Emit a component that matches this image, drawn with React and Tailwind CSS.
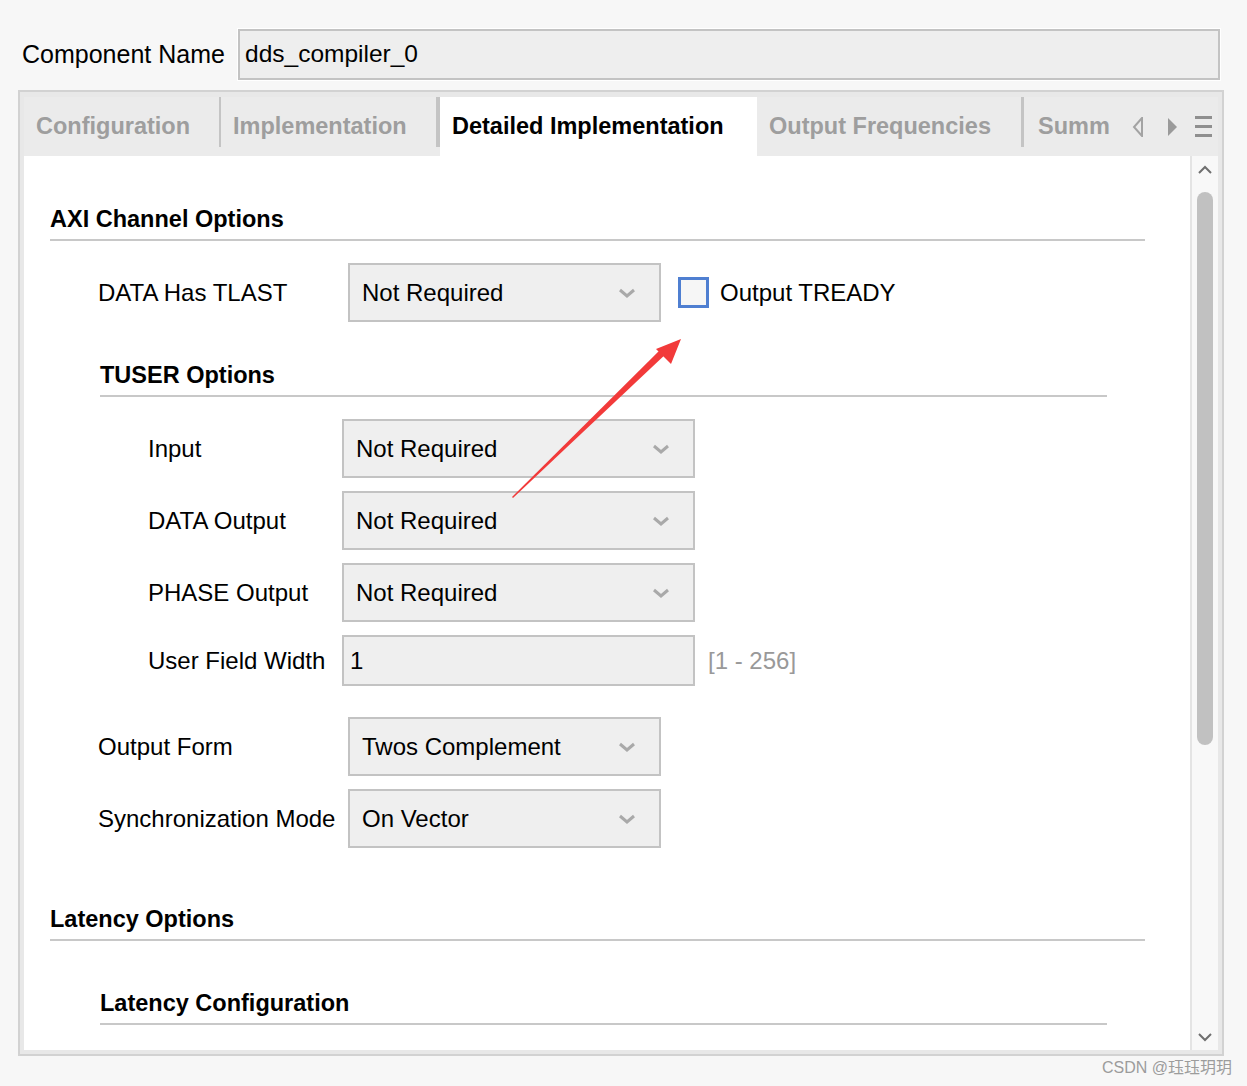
import React from "react";

const Chevron = ({ className = "" }) => (
  <svg width="18" height="12" viewBox="0 0 18 12" className={className}>
    <polyline points="2,3 9,9 16,3" fill="none" stroke="#a9a9a9" strokeWidth="3" />
  </svg>
);

const Select = ({ value, w }) => (
  <div
    className={`${w} h-[59px] border-2 border-[#c3c3c3] bg-[#efefef] flex items-center justify-between pl-[12px] pr-[23px]`}
  >
    <span className="text-[24px] text-black leading-none">{value}</span>
    <Chevron />
  </div>
);

const Heading = ({ text, className = "" }) => (
  <div className={`h-[41px] border-b-2 border-[#c8c8c8] flex items-center ${className}`}>
    <span className="text-[23.5px] font-bold text-black leading-none">{text}</span>
  </div>
);

const Tab = ({ label, w, active }) => (
  <div className={`${w} h-full flex items-center shrink-0 relative ${active ? "bg-white" : ""}`}>
    <span
      className={`pl-[12px] text-[23.5px] font-bold leading-none whitespace-nowrap ${
        active ? "text-black" : "text-[#9e9e9e]"
      }`}
    >
      {label}
    </span>
  </div>
);

const Sep = ({ className = "" }) => (
  <div className={`w-[2px] h-[50px] self-start bg-[#c4c4c4] shrink-0 ${className}`} />
);

export default function App() {
  return (
    <div
      className="w-[1247px] h-[1086px] bg-[#f7f7f7] relative overflow-hidden"
      style={{ fontFamily: '"Liberation Sans", Arial, "Noto Sans CJK SC", sans-serif' }}
    >
      {/* Component name row */}
      <div className="flex items-center pt-[28px] pl-[22px]">
        <span className="text-[25px] text-black leading-none w-[215px] whitespace-nowrap">Component Name</span>
        <div className="border border-white">
          <div className="w-[982px] h-[51px] border-2 border-[#c3c3c3] bg-[#eeeeee] flex items-center pl-[5px]">
            <span className="text-[24.5px] text-black leading-none">dds_compiler_0</span>
          </div>
        </div>
      </div>

      {/* Tab panel */}
      <div className="ml-[18px] mt-[9px] w-[1206px] h-[966px] border-2 border-[#d2d2d2] bg-[#e8e8e8] pt-[5px] pl-[4px] pr-[4px] pb-[4px] flex flex-col">
        {/* Tab bar */}
        <div className="h-[59px] bg-[#ebebeb] flex items-stretch overflow-hidden">
          <Tab label="Configuration" w="w-[195px]" />
          <Sep />
          <Tab label="Implementation" w="w-[215px]" />
          <Sep className="w-[4px] h-[50px]" />
          <Tab label="Detailed Implementation" w="w-[317px]" active />
          <Tab label="Output Frequencies" w="w-[264px]" />
          <Sep className="w-[3px]" />
          <div className="w-[100px] h-full flex items-center overflow-hidden shrink-0">
            <span className="pl-[14px] text-[23.5px] font-bold leading-none whitespace-nowrap text-[#9e9e9e]">
              Summ
            </span>
          </div>
          <div className="flex items-center h-full shrink-0">
            <svg width="14" height="20" viewBox="0 0 14 20" className="ml-[8px]">
              <polygon points="10,1 2,10 10,19" fill="none" stroke="#a3a3a3" strokeWidth="2" />
            </svg>
            <svg width="14" height="20" viewBox="0 0 14 20" className="ml-[20px]">
              <polygon points="2,1 11,10 2,19" fill="#9a9a9a" />
            </svg>
            <div className="ml-[15px] flex flex-col gap-[6px]">
              <div className="w-[17px] h-[3px] bg-[#8f8f8f]" />
              <div className="w-[17px] h-[3px] bg-[#8f8f8f]" />
              <div className="w-[17px] h-[3px] bg-[#8f8f8f]" />
            </div>
          </div>
        </div>

        {/* Body */}
        <div className="flex-1 flex min-h-0">
          <div className="w-[1166px] bg-white pl-[26px] pt-[44px]">
            <Heading text="AXI Channel Options" className="w-[1095px]" />

            <div className="flex items-center mt-[22px] pl-[48px]">
              <span className="w-[250px] text-[24px] leading-none text-black">DATA Has TLAST</span>
              <Select value="Not Required" w="w-[313px]" />
              <div className="ml-[17px] w-[31px] h-[31px] border-[3px] border-[#4f7fd1] bg-[#f6f6f6]" />
              <span className="ml-[11px] text-[24px] leading-none text-black">Output TREADY</span>
            </div>

            <div className="pl-[50px] mt-[34px]">
              <Heading text="TUSER Options" className="w-[1007px]" />
            </div>

            <div className="pl-[98px] mt-[22px] flex flex-col gap-[13px]">
              <div className="flex items-center">
                <span className="w-[194px] text-[24px] leading-none text-black">Input</span>
                <Select value="Not Required" w="w-[353px]" />
              </div>
              <div className="flex items-center">
                <span className="w-[194px] text-[24px] leading-none text-black">DATA Output</span>
                <Select value="Not Required" w="w-[353px]" />
              </div>
              <div className="flex items-center">
                <span className="w-[194px] text-[24px] leading-none text-black">PHASE Output</span>
                <Select value="Not Required" w="w-[353px]" />
              </div>
              <div className="flex items-center">
                <span className="w-[194px] text-[24px] leading-none text-black whitespace-nowrap">User Field Width</span>
                <div className="w-[353px] h-[51px] border-2 border-[#c3c3c3] bg-[#efefef] flex items-center pl-[6px]">
                  <span className="text-[24px] leading-none text-black">1</span>
                </div>
                <span className="ml-[13px] text-[24px] leading-none text-[#999999]">[1 - 256]</span>
              </div>
            </div>

            <div className="pl-[48px] mt-[31px] flex flex-col gap-[13px]">
              <div className="flex items-center">
                <span className="w-[250px] text-[24px] leading-none text-black">Output Form</span>
                <Select value="Twos Complement" w="w-[313px]" />
              </div>
              <div className="flex items-center">
                <span className="w-[250px] text-[24px] leading-none text-black whitespace-nowrap">Synchronization Mode</span>
                <Select value="On Vector" w="w-[313px]" />
              </div>
            </div>

            <div className="mt-[52px]">
              <Heading text="Latency Options" className="w-[1095px]" />
            </div>
            <div className="pl-[50px] mt-[43px]">
              <Heading text="Latency Configuration" className="w-[1007px]" />
            </div>
          </div>

          {/* Scrollbar */}
          <div className="w-[28px] bg-[#f8f8f8] border-l-2 border-[#e4e4e4] flex flex-col items-center">
            <svg width="16" height="10" viewBox="0 0 16 10" className="mt-[9px]">
              <polyline points="2,8 8,2 14,8" fill="none" stroke="#6f6f6f" strokeWidth="2" />
            </svg>
            <div className="mt-[17px] w-[16px] h-[553px] rounded-full bg-[#c1c1c1]" />
            <div className="flex-1" />
            <svg width="16" height="10" viewBox="0 0 16 10" className="mb-[8px]">
              <polyline points="2,2 8,8 14,2" fill="none" stroke="#6f6f6f" strokeWidth="2" />
            </svg>
          </div>
        </div>
      </div>

      {/* Watermark */}
      <div className="flex justify-end pr-[15px] mt-[4px]">
        <span className="text-[16px] leading-none text-[#9c9c9c]">CSDN @珏珏玥玥</span>
      </div>

      {/* Red annotation arrow */}
      <svg className="absolute left-0 top-0 pointer-events-none" width="1247" height="1086">
        <polygon points="513,498 668,352 663,347 512,497" fill="#f23a3a" />
        <polygon points="681,339 656,349 671,364" fill="#f23a3a" />
      </svg>
    </div>
  );
}
